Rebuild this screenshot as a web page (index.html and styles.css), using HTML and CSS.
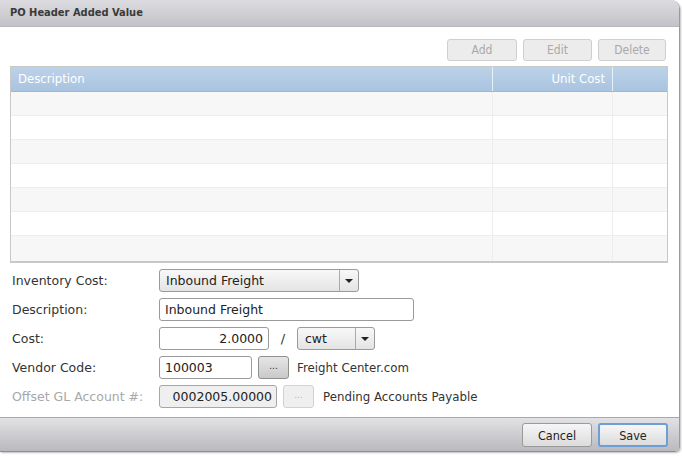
FILE: index.html
```html
<!DOCTYPE html>
<html>
<head>
<meta charset="utf-8">
<link rel="stylesheet" href="styles.css">
</head>
<body>
<div class="window">
  <div class="titlebar">PO Header Added Value</div>
  <div class="content">
    <div class="toolbar">
      <button class="btn btn-disabled btn-add">Add</button>
      <button class="btn btn-disabled btn-edit">Edit</button>
      <button class="btn btn-disabled btn-del">Delete</button>
    </div>
    <div class="grid">
      <div class="grow ghead">
        <div class="c1">Description</div>
        <div class="c2">Unit Cost</div>
        <div class="c3"></div>
      </div>
      <div class="grow alt"><div class="c1"></div><div class="c2"></div><div class="c3"></div></div>
      <div class="grow"><div class="c1"></div><div class="c2"></div><div class="c3"></div></div>
      <div class="grow alt"><div class="c1"></div><div class="c2"></div><div class="c3"></div></div>
      <div class="grow"><div class="c1"></div><div class="c2"></div><div class="c3"></div></div>
      <div class="grow alt"><div class="c1"></div><div class="c2"></div><div class="c3"></div></div>
      <div class="grow"><div class="c1"></div><div class="c2"></div><div class="c3"></div></div>
      <div class="grow alt last"><div class="c1"></div><div class="c2"></div><div class="c3"></div></div>
    </div>
    <div class="form">
      <div class="frow">
        <div class="label">Inventory Cost:</div>
        <div class="select sel-inv"><span class="sel-text">Inbound Freight</span><span class="sel-arrow"></span></div>
      </div>
      <div class="frow">
        <div class="label">Description:</div>
        <div class="input in-desc">Inbound Freight</div>
      </div>
      <div class="frow">
        <div class="label">Cost:</div>
        <div class="input in-cost">2.0000</div>
        <span class="slash">/</span>
        <div class="select sel-uom"><span class="sel-text">cwt</span><span class="sel-arrow"></span></div>
      </div>
      <div class="frow">
        <div class="label">Vendor Code:</div>
        <div class="input in-vendor">100003</div>
        <button class="dots">...</button>
        <span class="info">Freight Center.com</span>
      </div>
      <div class="frow">
        <div class="label label-disabled">Offset GL Account #:</div>
        <div class="input in-gl">0002005.00000</div>
        <button class="dots dots-disabled">...</button>
        <span class="info info-gl">Pending Accounts Payable</span>
      </div>
    </div>
  </div>
  <div class="footer">
    <button class="btn btn-cancel">Cancel</button>
    <button class="btn btn-save">Save</button>
  </div>
</div>
</body>
</html>
```

FILE: styles.css
```css
* { box-sizing: border-box; }
html, body { margin: 0; padding: 0; background: #ffffff; }
body {
  font-family: "DejaVu Sans", Verdana, sans-serif;
  font-size: 12px;
  color: #333;
  width: 682px;
  height: 456px;
  overflow: hidden;
}
.window {
  width: 680px;
  height: 452px;
  border-right: 1px solid #9a9a9e;
  border-bottom: 1px solid #8e8e92;
  border-top-right-radius: 9px;
  border-bottom-right-radius: 5px;
  display: flex;
  flex-direction: column;
  overflow: hidden;
  box-shadow: 1px 1px 2px rgba(0,0,0,0.25);
}
.titlebar {
  height: 27px;
  flex: none;
  background: linear-gradient(#dcdce0, #c2c2c8);
  border-bottom: 1px solid #b8b8bc;
  font-family: "DejaVu Sans Condensed", "DejaVu Sans", sans-serif;
  font-weight: bold;
  font-size: 11px;
  color: #3a3a3a;
  padding: 6px 0 0 10px;
}
.content {
  flex: 1;
  background: #fff;
  padding: 12px 0 0 10px;
}
.toolbar {
  display: flex;
  justify-content: flex-end;
  gap: 6px;
  padding-right: 13px;
  height: 22px;
  margin-bottom: 5px;
}
.btn {
  font-family: "DejaVu Sans Condensed", "DejaVu Sans", sans-serif;
  font-size: 12px;
  height: 22px;
  border-radius: 3px;
  padding: 0;
  margin: 0;
}
.btn-disabled {
  background: #ececec;
  border: 1px solid #cfcfcf;
  color: #a9a9a9;
}
.btn-add { width: 70px; }
.btn-edit { width: 69px; }
.btn-del { width: 68px; }
.grid {
  width: 658px;
  border: 1px solid #c8c8c8;
  border-bottom-width: 2px;
}
.grow {
  display: flex;
  height: 24px;
  background: #fff;
  border-bottom: 1px solid #ededed;
}
.grow.last { border-bottom: none; height: 25px; }
.grow.alt { background: #f7f7f7; }
.c1 { width: 482px; border-right: 1px solid #ededed; }
.c2 { width: 120px; border-right: 1px solid #ededed; }
.c3 { flex: 1; }
.ghead {
  height: 25px;
  background: linear-gradient(#bcd2e8, #a9c4e0);
  border-bottom: 1px solid #9fb8d2;
  color: #fff;
  font-family: "DejaVu Sans Condensed", "DejaVu Sans", sans-serif;
  font-size: 13px;
  line-height: 24px;
}
.ghead .c1 { padding-left: 7px; border-right: 1px solid #e8f0f8; }
.ghead .c2 { text-align: right; padding-right: 7px; border-right: 1px solid #e8f0f8; }
.form {
  padding-top: 3px;
  padding-left: 2px;
}
.frow {
  display: flex;
  align-items: center;
  height: 29px;
}
.label {
  width: 147px;
  color: #333;
  font-size: 12.5px;
}
.label-disabled { color: #a8a8a8; }
.input {
  height: 23px;
  border: 1px solid #9a9a9a;
  border-radius: 3px;
  background: #fff;
  font-size: 12.5px;
  line-height: 21px;
  padding: 0 5px;
  color: #222;
}
.in-desc { width: 255px; }
.in-cost { width: 110px; text-align: right; }
.in-vendor { width: 93px; }
.in-gl { width: 118px; text-align: right; background: #efefef; border-color: #a6a6a6; padding-right: 4px; }
.select {
  height: 23px;
  border: 1px solid #9a9a9a;
  border-radius: 3px;
  background: linear-gradient(#f8f8f8, #e4e4e4);
  display: flex;
  font-size: 12.5px;
  color: #222;
}
.sel-inv { width: 200px; }
.sel-uom { width: 78px; }
.sel-text { flex: 1; padding-left: 6px; line-height: 21px; }
.sel-arrow {
  width: 19px;
  border-left: 1px solid #aaa;
  position: relative;
}
.sel-arrow::after {
  content: "";
  position: absolute;
  left: 5px;
  top: 9px;
  border-left: 4px solid transparent;
  border-right: 4px solid transparent;
  border-top: 4px solid #222;
}
.sel-uom .sel-text { padding-left: 7px; }
.slash { width: 28px; text-align: center; font-size: 13px; color: #333; }
.dots {
  width: 31px;
  height: 23px;
  margin-left: 6px;
  border: 1px solid #8f8f8f;
  border-radius: 3px;
  background: linear-gradient(#e6e6e6, #c9c9c9);
  font-size: 10px;
  color: #333;
  padding: 0 0 3px 0;
  line-height: 10px;
}
.dots-disabled {
  background: #efefef;
  border-color: #d2d2d2;
  color: #b8b8b8;
}
.info { margin-left: 8px; font-size: 11.8px; color: #333; }
.info-gl { margin-left: 9px; }
.footer {
  height: 34px;
  flex: none;
  background: linear-gradient(#e2e2e5, #b9b9be);
  border-top: 1px solid #a8a8ac;
  display: flex;
  justify-content: flex-end;
  gap: 6px;
  padding: 5px 11px 0 0;
}
.btn-cancel, .btn-save {
  width: 70px;
  height: 24px;
  background: linear-gradient(#f6f6f6, #dcdcdc);
  border: 1px solid #9a9a9a;
  color: #222;
  font-size: 12.5px;
}
.btn-save { border: 2px solid #6d9fd6; }
```
